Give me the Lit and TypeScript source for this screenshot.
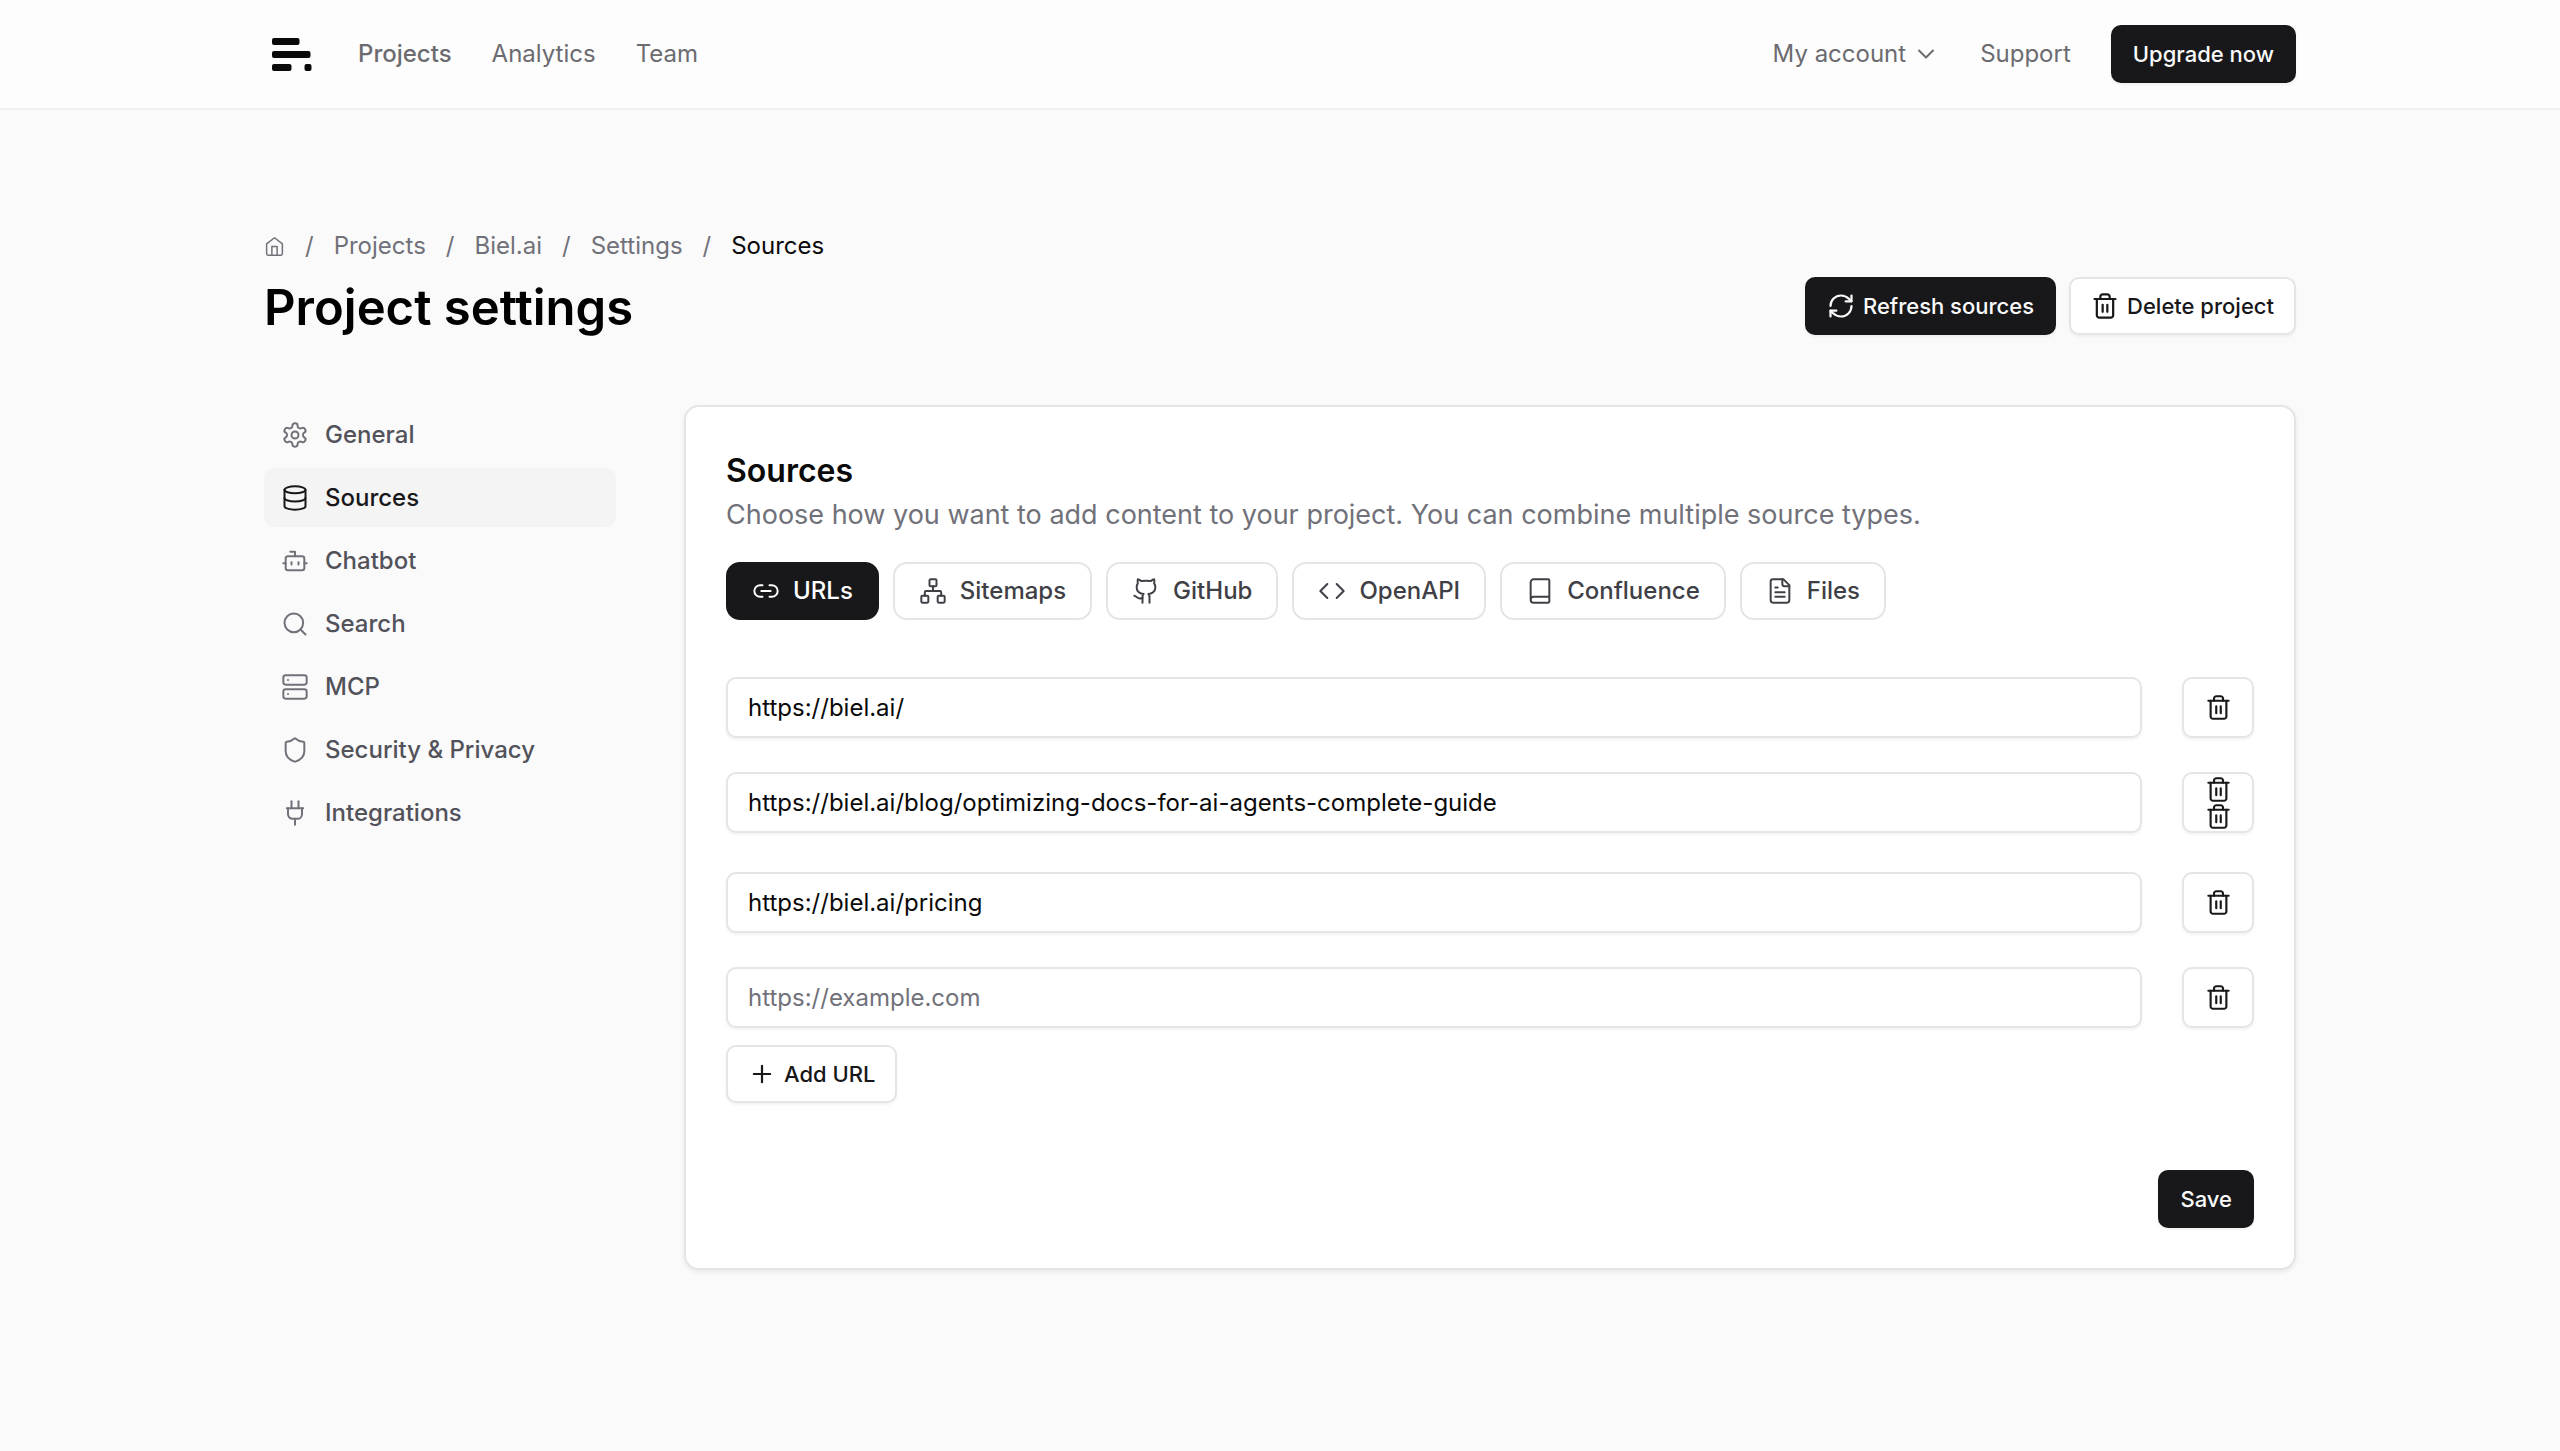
import { LitElement, html, css, svg, nothing, type SVGTemplateResult } from "lit";
import { customElement, property, state } from "lit/decorators.js";
import { classMap } from "lit/directives/class-map.js";

const icons: Record<string, SVGTemplateResult> = {
  chevron: svg`<path d="m6 9 6 6 6-6"/>`,
  home: svg`<path d="m3 9 9-7 9 7v11a2 2 0 0 1-2 2H5a2 2 0 0 1-2-2z"/><path d="M9 22V12h6v10"/>`,
  refresh: svg`<path d="M3 12a9 9 0 0 1 9-9 9.75 9.75 0 0 1 6.74 2.74L21 8"/><path d="M21 3v5h-5"/><path d="M21 12a9 9 0 0 1-9 9 9.75 9.75 0 0 1-6.74-2.74L3 16"/><path d="M8 16H3v5"/>`,
  trash: svg`<path d="M3 6h18"/><path d="M19 6v14c0 1-1 2-2 2H7c-1 0-2-1-2-2V6"/><path d="M8 6V4c0-1 1-2 2-2h4c1 0 2 1 2 2v2"/><path d="M10 11v6"/><path d="M14 11v6"/>`,
  settings: svg`<path d="M12.22 2h-.44a2 2 0 0 0-2 2v.18a2 2 0 0 1-1 1.73l-.43.25a2 2 0 0 1-2 0l-.15-.08a2 2 0 0 0-2.73.73l-.22.38a2 2 0 0 0 .73 2.73l.15.1a2 2 0 0 1 1 1.72v.51a2 2 0 0 1-1 1.74l-.15.09a2 2 0 0 0-.73 2.73l.22.38a2 2 0 0 0 2.73.73l.15-.08a2 2 0 0 1 2 0l.43.25a2 2 0 0 1 1 1.73V20a2 2 0 0 0 2 2h.44a2 2 0 0 0 2-2v-.18a2 2 0 0 1 1-1.73l.43-.25a2 2 0 0 1 2 0l.15.08a2 2 0 0 0 2.73-.73l.22-.39a2 2 0 0 0-.73-2.73l-.15-.08a2 2 0 0 1-1-1.74v-.5a2 2 0 0 1 1-1.74l.15-.09a2 2 0 0 0 .73-2.73l-.22-.38a2 2 0 0 0-2.73-.73l-.15.08a2 2 0 0 1-2 0l-.43-.25a2 2 0 0 1-1-1.73V4a2 2 0 0 0-2-2z"/><circle cx="12" cy="12" r="3"/>`,
  database: svg`<ellipse cx="12" cy="5" rx="9" ry="3"/><path d="M3 5v14a9 3 0 0 0 18 0V5"/><path d="M3 12a9 3 0 0 0 18 0"/>`,
  bot: svg`<path d="M12 8V4H8"/><rect width="16" height="12" x="4" y="8" rx="2"/><path d="M2 14h2"/><path d="M20 14h2"/><path d="M15 13v2"/><path d="M9 13v2"/>`,
  search: svg`<circle cx="11" cy="11" r="8"/><path d="m21 21-4.3-4.3"/>`,
  server: svg`<rect width="20" height="8" x="2" y="2" rx="2"/><rect width="20" height="8" x="2" y="14" rx="2"/><path d="M6 6h.01"/><path d="M6 18h.01"/>`,
  shield: svg`<path d="M20 13c0 5-3.5 7.5-7.66 8.95a1 1 0 0 1-.67-.01C7.5 20.5 4 18 4 13V6a1 1 0 0 1 1-1c2 0 4.5-1.2 6.24-2.72a1.17 1.17 0 0 1 1.52 0C14.51 3.81 17 5 19 5a1 1 0 0 1 1 1z"/>`,
  plug: svg`<path d="M12 22v-5"/><path d="M9 8V2"/><path d="M15 8V2"/><path d="M18 8v5a4 4 0 0 1-4 4h-4a4 4 0 0 1-4-4V8"/><path d="M5 8h14"/>`,
  link: svg`<path d="M9 17H7A5 5 0 0 1 7 7h2"/><path d="M15 7h2a5 5 0 1 1 0 10h-2"/><path d="M8 12h8"/>`,
  network: svg`<rect x="16" y="16" width="6" height="6" rx="1"/><rect x="2" y="16" width="6" height="6" rx="1"/><rect x="9" y="2" width="6" height="6" rx="1"/><path d="M5 16v-3a1 1 0 0 1 1-1h12a1 1 0 0 1 1 1v3"/><path d="M12 12V8"/>`,
  github: svg`<path d="M15 22v-4a4.8 4.8 0 0 0-1-3.5c3 0 6-2 6-5.5.08-1.25-.27-2.48-1-3.5.28-1.15.28-2.35 0-3.5 0 0-1 0-3 1.5-2.64-.5-5.36-.5-8 0C6 2 5 2 5 2c-.3 1.15-.3 2.35 0 3.5A5.403 5.403 0 0 0 4 9c0 3.5 3 5.5 6 5.5-.39.49-.68 1.05-.85 1.65-.17.6-.22 1.23-.15 1.85v4"/><path d="M9 18c-4.51 2-5-2-7-2"/>`,
  code: svg`<path d="m16 18 6-6-6-6"/><path d="m8 6-6 6 6 6"/>`,
  book: svg`<path d="M4 19.5v-15A2.5 2.5 0 0 1 6.5 2H19a1 1 0 0 1 1 1v18a1 1 0 0 1-1 1H6.5a1 1 0 0 1 0-5H20"/>`,
  file: svg`<path d="M15 2H6a2 2 0 0 0-2 2v16a2 2 0 0 0 2 2h12a2 2 0 0 0 2-2V7Z"/><path d="M14 2v4a2 2 0 0 0 2 2h4"/><path d="M10 9H8"/><path d="M16 13H8"/><path d="M16 17H8"/>`,
  plus: svg`<path d="M5 12h14"/><path d="M12 5v14"/>`,
};

@customElement("line-icon")
class LineIcon extends LitElement {
  @property() name = "";

  static styles = css`
    :host {
      display: block;
      flex: none;
      width: 28px;
      height: 28px;
    }
    .glyph {
      display: block;
      width: 100%;
      height: 100%;
      fill: none;
      stroke: currentColor;
      stroke-width: var(--icon-stroke, 1.7);
      stroke-linecap: round;
      stroke-linejoin: round;
    }
  `;

  render() {
    return html`<svg class="glyph" viewBox="0 0 24 24" aria-hidden="true">${icons[this.name] ?? nothing}</svg>`;
  }
}

interface UrlRow {
  value: string;
  bins: number;
}

@customElement("app-root")
class AppRoot extends LitElement {
  @state() private tab = "URLs";
  @state() private section = "Sources";
  @state() private rows: UrlRow[] = [
    { value: "https://biel.ai/", bins: 1 },
    { value: "https://biel.ai/blog/optimizing-docs-for-ai-agents-complete-guide", bins: 2 },
    { value: "https://biel.ai/pricing", bins: 1 },
    { value: "", bins: 1 },
  ];

  private sections = [
    ["General", "settings"],
    ["Sources", "database"],
    ["Chatbot", "bot"],
    ["Search", "search"],
    ["MCP", "server"],
    ["Security & Privacy", "shield"],
    ["Integrations", "plug"],
  ];

  private tabs = [
    ["URLs", "link"],
    ["Sitemaps", "network"],
    ["GitHub", "github"],
    ["OpenAPI", "code"],
    ["Confluence", "book"],
    ["Files", "file"],
  ];

  static styles = css`
    :host {
      display: block;
      min-height: 100vh;
      background: #fafafa;
      color: #0a0a0a;
      font-family: Inter, "Liberation Sans", sans-serif;
      font-size: 24px;
      line-height: 32px;
    }
    * {
      box-sizing: border-box;
    }
    a {
      color: inherit;
      text-decoration: none;
    }
    button,
    input {
      font: inherit;
      color: inherit;
      margin: 0;
    }
    button {
      cursor: pointer;
    }
    .wrap {
      max-width: 2080px;
      margin: 0 auto;
      padding: 0 24px;
    }
    .topbar {
      background: #fdfdfd;
      border-bottom: 2px solid #f1f1f2;
    }
    .topbar-row {
      display: flex;
      align-items: center;
      justify-content: space-between;
      padding-top: 25px;
      padding-bottom: 25px;
    }
    .nav {
      display: flex;
      align-items: center;
      gap: 40px;
      color: #6b6b70;
    }
    .logo {
      display: block;
      width: 54px;
      height: 54px;
    }
    .nav-current {
      font-weight: 500;
    }
    .account {
      display: flex;
      align-items: center;
      gap: 6px;
      border: 0;
      padding: 0;
      background: none;
    }
    .btn {
      display: inline-flex;
      align-items: center;
      justify-content: center;
      gap: 8px;
      height: 58px;
      padding: 0 20px;
      border: 2px solid #e5e5e7;
      border-radius: 10px;
      background: #fff;
      color: #18181b;
      font-size: 22px;
      font-weight: 500;
      box-shadow: 0 2px 3px rgba(0, 0, 0, 0.05);
      white-space: nowrap;
      --icon-stroke: 1.9;
    }
    .btn-dark {
      background: #18181b;
      border-color: #18181b;
      color: #fafafa;
    }
    .page {
      padding-top: 120px;
      padding-bottom: 80px;
    }
    .crumbs {
      display: flex;
      align-items: center;
      gap: 20px;
      margin: 0;
      padding: 0;
      list-style: none;
      color: #71717a;
    }
    .crumb-home {
      width: 21px;
      height: 21px;
    }
    .home-link {
      display: block;
    }
    .crumb-current {
      color: #0a0a0a;
    }
    .title-row {
      display: flex;
      align-items: flex-start;
      justify-content: space-between;
      margin-top: 15px;
    }
    .title {
      margin: 0;
      font-size: 49px;
      line-height: 62px;
      font-weight: 600;
      color: #000;
    }
    .actions {
      display: flex;
      gap: 13px;
    }
    .columns {
      display: grid;
      grid-template-columns: 352px minmax(0, 1fr);
      gap: 68px;
      align-items: start;
      margin-top: 66px;
    }
    .side {
      display: flex;
      flex-direction: column;
      gap: 4px;
    }
    .side-link {
      display: flex;
      align-items: center;
      gap: 16px;
      height: 59px;
      padding: 0 17px;
      border-radius: 10px;
      color: #52525b;
      font-weight: 500;
    }
    .side-link line-icon {
      color: #71717a;
    }
    .side-current,
    .side-current line-icon {
      color: #18181b;
    }
    .side-current {
      background: #f4f4f5;
    }
    .card {
      padding: 40px;
      border: 2px solid #e5e5e7;
      border-radius: 15px;
      background: #fff;
      box-shadow: 0 2px 5px rgba(0, 0, 0, 0.08);
    }
    .card-title {
      margin: 4px 0 0;
      font-size: 32px;
      line-height: 40px;
      font-weight: 600;
    }
    .card-lead {
      margin: 4px 0 0;
      font-size: 27px;
      line-height: 40px;
      color: #71717a;
    }
    .tabs {
      display: flex;
      flex-wrap: wrap;
      gap: 14px;
      margin-top: 27px;
    }
    .tab {
      display: flex;
      align-items: center;
      gap: 13px;
      height: 58px;
      padding: 0 24px;
      border: 2px solid #e5e5e7;
      border-radius: 14px;
      background: #fff;
      color: #3f3f46;
      font-weight: 500;
    }
    .tab-current {
      background: #18181b;
      border-color: #18181b;
      color: #fff;
    }
    .urls {
      display: flex;
      flex-direction: column;
      gap: 34px;
      margin-top: 57px;
    }
    .url-row {
      display: flex;
      gap: 40px;
      min-height: 61px;
    }
    .url-tall {
      min-height: 66px;
    }
    .url-input {
      flex: 1;
      min-width: 0;
      height: 61px;
      padding: 0 20px;
      border: 2px solid #e5e5e7;
      border-radius: 10px;
      background: #fff;
      box-shadow: 0 2px 3px rgba(0, 0, 0, 0.05);
      outline: none;
    }
    .url-input::placeholder {
      color: #71717a;
      opacity: 1;
    }
    .url-delete {
      flex: none;
      flex-direction: column;
      gap: 0;
      width: 72px;
      height: 61px;
      padding: 0;
    }
    .url-delete line-icon {
      width: 27px;
      height: 27px;
    }
    .add {
      margin-top: 17px;
    }
    .foot {
      display: flex;
      justify-content: flex-end;
      margin-top: 67px;
    }
  `;

  private edit(index: number, value: string) {
    this.rows = this.rows.map((row, i) => (i === index ? { ...row, value } : row));
  }

  private remove(index: number) {
    this.rows = this.rows.filter((_, i) => i !== index);
  }

  private add() {
    this.rows = [...this.rows, { value: "", bins: 1 }];
  }

  render() {
    return html`
      <header class="topbar">
        <div class="wrap topbar-row">
          <nav class="nav" aria-label="Main">
            <a href="#" aria-label="Biel.ai">
              <svg class="logo" viewBox="0 0 54 54" fill="#0a0a0a" aria-hidden="true">
                <rect x="8" y="11" width="27.5" height="7" rx="2" />
                <rect x="8" y="24" width="38.5" height="7" rx="2" />
                <rect x="8" y="37" width="19.5" height="7" rx="2" />
                <rect x="40.5" y="37" width="7" height="7" rx="2" />
              </svg>
            </a>
            <a class="nav-current" href="#projects">Projects</a>
            <a href="#analytics">Analytics</a>
            <a href="#team">Team</a>
          </nav>
          <nav class="nav" aria-label="Account">
            <button class="account">My account <line-icon name="chevron"></line-icon></button>
            <a href="#support">Support</a>
            <button class="btn btn-dark">Upgrade now</button>
          </nav>
        </div>
      </header>

      <main class="wrap page">
        <nav aria-label="Breadcrumb">
          <ol class="crumbs">
            <li>
              <a class="home-link" href="#" aria-label="Home"><line-icon class="crumb-home" name="home"></line-icon></a>
            </li>
            <li aria-hidden="true">/</li>
            <li><a href="#projects">Projects</a></li>
            <li aria-hidden="true">/</li>
            <li><a href="#biel">Biel.ai</a></li>
            <li aria-hidden="true">/</li>
            <li><a href="#settings">Settings</a></li>
            <li aria-hidden="true">/</li>
            <li class="crumb-current" aria-current="page">Sources</li>
          </ol>
        </nav>

        <div class="title-row">
          <h1 class="title">Project settings</h1>
          <div class="actions">
            <button class="btn btn-dark"><line-icon name="refresh"></line-icon>Refresh sources</button>
            <button class="btn"><line-icon name="trash"></line-icon>Delete project</button>
          </div>
        </div>

        <div class="columns">
          <nav class="side" aria-label="Settings">
            ${this.sections.map(
              ([label, icon]) => html`
                <a
                  class=${classMap({ "side-link": true, "side-current": label === this.section })}
                  href="#${icon}"
                  @click=${() => (this.section = label)}
                  ><line-icon name=${icon}></line-icon>${label}</a
                >
              `,
            )}
          </nav>

          <section class="card">
            <h2 class="card-title">Sources</h2>
            <p class="card-lead">
              Choose how you want to add content to your project. You can combine multiple source types.
            </p>

            <div class="tabs" role="tablist">
              ${this.tabs.map(
                ([label, icon]) => html`
                  <button
                    role="tab"
                    aria-selected=${label === this.tab}
                    class=${classMap({ tab: true, "tab-current": label === this.tab })}
                    @click=${() => (this.tab = label)}
                  >
                    <line-icon name=${icon}></line-icon>${label}
                  </button>
                `,
              )}
            </div>

            <div class="urls">
              ${this.rows.map(
                (row, i) => html`
                  <div class=${classMap({ "url-row": true, "url-tall": row.bins > 1 })}>
                    <input
                      class="url-input"
                      type="url"
                      aria-label="URL ${i + 1}"
                      placeholder="https://example.com"
                      .value=${row.value}
                      @input=${(e: Event) => this.edit(i, (e.target as HTMLInputElement).value)}
                    />
                    <button class="btn url-delete" aria-label="Delete URL ${i + 1}" @click=${() => this.remove(i)}>
                      ${Array.from({ length: row.bins }, () => html`<line-icon name="trash"></line-icon>`)}
                    </button>
                  </div>
                `,
              )}
            </div>
            <button class="btn add" @click=${this.add}><line-icon name="plus"></line-icon>Add URL</button>

            <div class="foot">
              <button class="btn btn-dark">Save</button>
            </div>
          </section>
        </div>
      </main>
    `;
  }
}
